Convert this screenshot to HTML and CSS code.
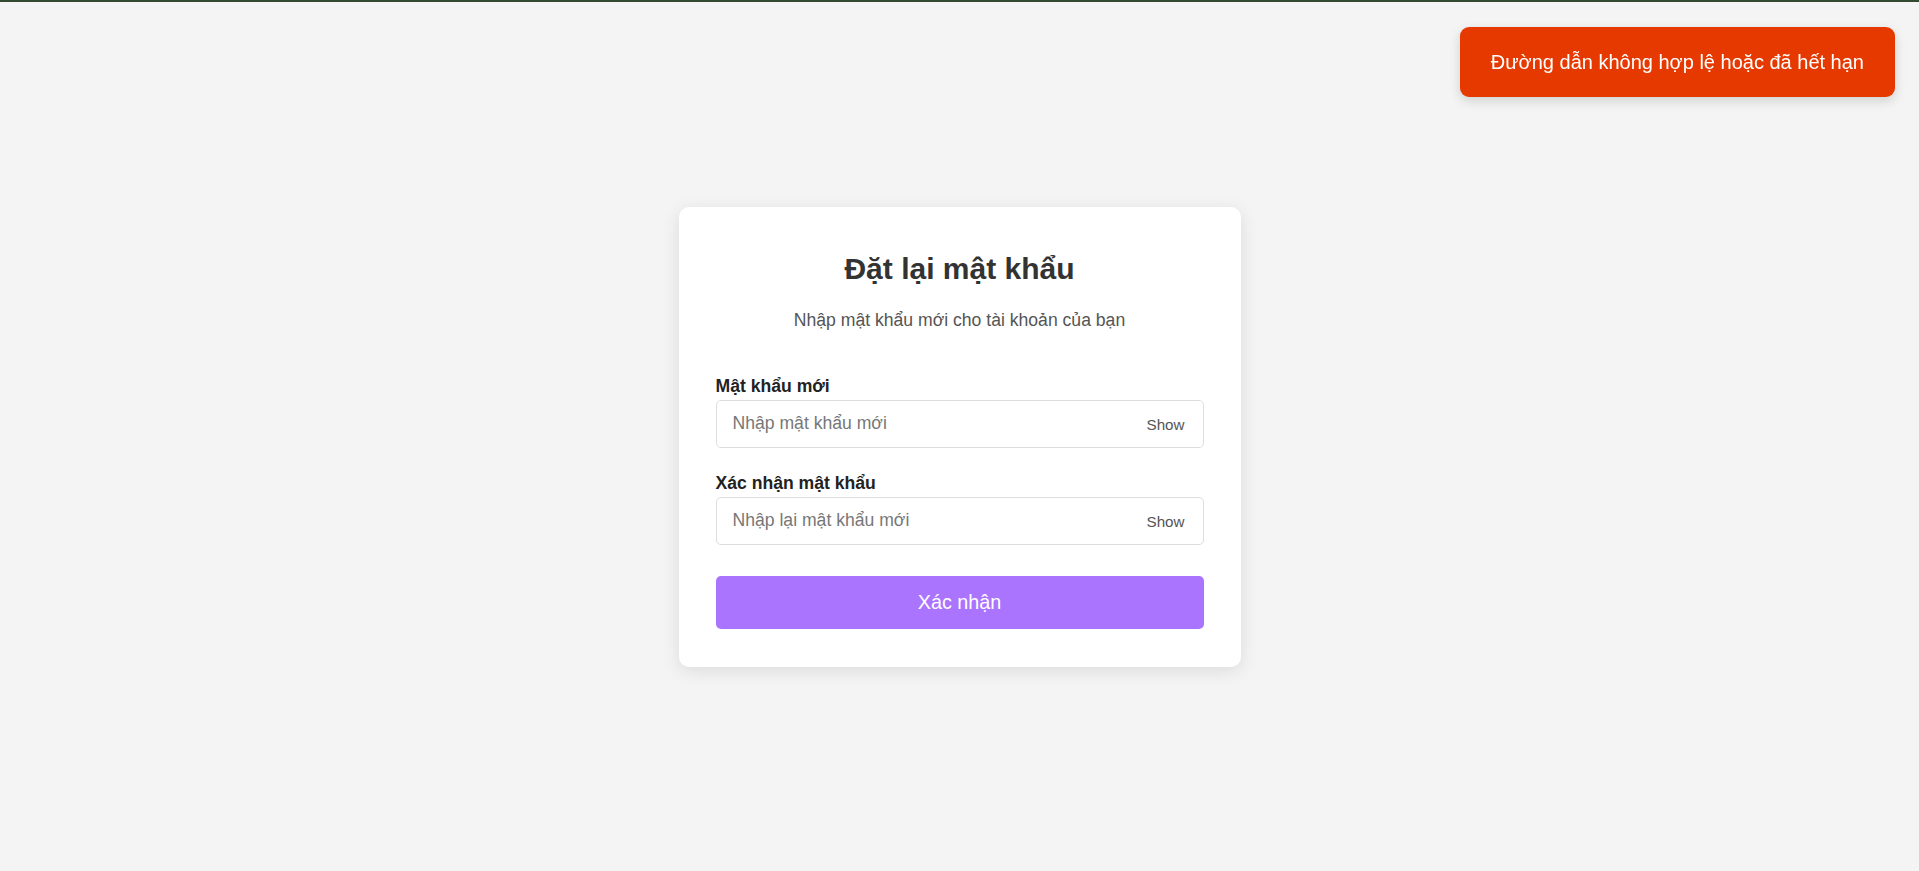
FILE: index.html
```html
<!DOCTYPE html>
<html lang="vi">
<head>
<meta charset="utf-8">
<title>Đặt lại mật khẩu</title>
<link rel="stylesheet" href="styles.css">
</head>
<body>
<div class="topbar"></div>
<main class="page">
  <section class="card">
    <h1 class="title">Đặt lại mật khẩu</h1>
    <p class="subtitle">Nhập mật khẩu mới cho tài khoản của bạn</p>
    <form class="form">
      <div class="field">
        <label class="label" for="pw">Mật khẩu mới</label>
        <div class="input-wrap">
          <input class="input" id="pw" type="password" placeholder="Nhập mật khẩu mới">
          <button class="show" type="button">Show</button>
        </div>
      </div>
      <div class="field">
        <label class="label" for="pw2">Xác nhận mật khẩu</label>
        <div class="input-wrap">
          <input class="input" id="pw2" type="password" placeholder="Nhập lại mật khẩu mới">
          <button class="show" type="button">Show</button>
        </div>
      </div>
      <button class="submit" type="button">Xác nhận</button>
    </form>
  </section>
</main>
<div class="toast">Đường dẫn không hợp lệ hoặc đã hết hạn</div>
</body>
</html>
```

FILE: styles.css
```css
* { box-sizing: border-box; }
html, body { margin: 0; padding: 0; }
body {
  background: #f4f4f4;
  font-family: "Liberation Sans", Arial, sans-serif;
  color: #333;
}
.topbar {
  height: 2px;
  background: #314a30;
}
.page {
  height: calc(100vh - 2px);
  display: flex;
  align-items: center;
  justify-content: center;
}
.card {
  width: 562px;
  background: #fff;
  border-radius: 10px;
  box-shadow: 0 4px 18px rgba(0, 0, 0, 0.1);
  padding: 38px 37px 38px;
}
.title {
  margin: 7px 0 0;
  font-size: 30px;
  line-height: 34px;
  font-weight: 700;
  text-align: center;
  color: #333;
}
.subtitle {
  margin: 24px 0 0;
  font-size: 17.6px;
  line-height: 20px;
  text-align: center;
  color: #555;
}
.form {
  margin-top: 46px;
  display: flex;
  flex-direction: column;
}
.field {
  display: flex;
  flex-direction: column;
  gap: 4px;
  margin-bottom: 25px;
}
.field + .field { margin-bottom: 31px; }
.label {
  font-size: 17.6px;
  line-height: 20px;
  font-weight: 700;
  color: #222;
}
.input-wrap {
  height: 48px;
  border: 1px solid #ddd;
  border-radius: 5px;
  display: flex;
  align-items: center;
  padding: 0 15px 0 16px;
}
.input {
  flex: 1;
  border: 0;
  outline: 0;
  background: transparent;
  font-family: "Liberation Sans", Arial, sans-serif;
  font-size: 17.6px;
  color: #333;
  padding: 0;
  height: 100%;
}
.input::placeholder { color: #777; }
.show {
  border: 0;
  background: transparent;
  font-family: "Liberation Sans", Arial, sans-serif;
  font-size: 15.2px;
  color: #555;
  padding: 0 3px;
  margin-top: 2px;
  cursor: pointer;
}
.submit {
  height: 53px;
  border: 0;
  border-radius: 5px;
  background: #aa74ff;
  color: #fff;
  font-family: "Liberation Sans", Arial, sans-serif;
  font-size: 19.8px;
  padding-top: 2px;
  cursor: pointer;
}
.toast {
  position: fixed;
  top: 27px;
  right: 24px;
  background: #e63900;
  color: #fff;
  font-size: 20px;
  line-height: 24px;
  padding: 23px 31px;
  border-radius: 9px;
  box-shadow: 0 4px 12px rgba(0, 0, 0, 0.15);
}
```
